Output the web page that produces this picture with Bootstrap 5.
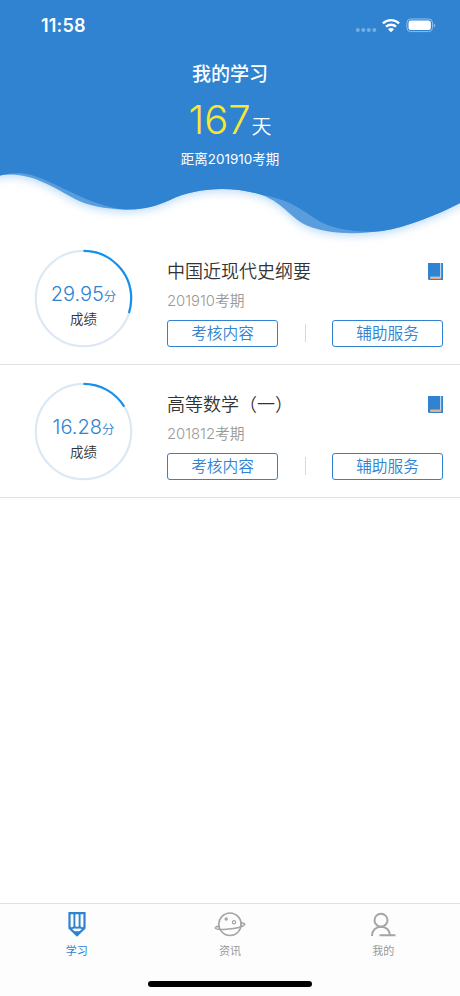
<!DOCTYPE html>
<html lang="zh-CN">
<head>
<meta charset="utf-8">
<meta name="viewport" content="width=device-width, initial-scale=1">
<title>我的学习</title>
<link href="https://cdn.jsdelivr.net/npm/bootstrap@5.3.0/dist/css/bootstrap.min.css" rel="stylesheet">
<style>
:root{--brand:#2f83d1}
body{font-family:Inter,"Noto Sans CJK SC",sans-serif;color:#333;line-height:1.2}
.screen{height:996px}
.hero{background:var(--brand);height:170px;z-index:1}
.status{height:50px;padding:0 24px 0 41px}
.clock{font-size:18px;font-weight:600;letter-spacing:.2px;padding-top:2px}
.hero-title{font-size:19px;font-weight:500;line-height:24px;margin-top:13px}
.days{font-size:40px;font-weight:300;line-height:46px;color:#f9e632;margin-top:10px}
.days small{font-size:20px;color:#fff;margin-left:1px;font-weight:350}
.period-note{font-size:13.5px;line-height:18px;margin-top:0}
.wave{height:61px}
.wave svg{overflow:visible}
.course{height:133.4px;border-bottom:1.5px solid #e0e1e3;padding:1px 17px 0 34px}
.course:first-child{height:134px;padding-top:2px}
.ring{width:99px;height:99px;display:grid;flex:none}
.ring>*{grid-area:1/1}
.score-box{padding-top:13px}
.score{font-size:20px;font-weight:350;line-height:24px;color:var(--brand)}
.score small{font-size:12.5px;font-weight:350}
.score-label{font-size:13.5px;line-height:18px;margin-top:1px;font-weight:350}
.info{margin-left:34px;padding-top:9px}
.course-name{font-size:18px;line-height:24px;font-weight:350}
.term{font-size:14.8px;line-height:18px;color:#999;font-weight:350;margin-top:8px}
.actions{margin-top:10px}
.btn-course{width:111px;height:27px;padding:0;font-size:15.7px;font-weight:350;line-height:25px;border:1.3px solid var(--brand);border-radius:3px;color:var(--brand)}
.divider{width:1px;height:18px;background:#d8d8d8}
.tabs{height:93px;border-top:1px solid #e1e1e1;background:#fdfdfd}
.tab{flex:1;color:#999;font-size:11px;line-height:14px;text-decoration:none;padding-top:6px}
.tab.active{color:var(--brand)}
.tab span{margin-top:4px}
.home-bar{width:164px;height:5.5px;background:#000;margin-bottom:9.5px}
</style>
</head>
<body>
<div class="screen d-flex flex-column bg-white overflow-hidden">
  <header class="hero position-relative text-white text-center">
    <div class="status d-flex align-items-center justify-content-between">
      <span class="clock">11:58</span>
      <svg width="82" height="20" viewBox="354 15 82 20">
        <g fill="#73afe3"><circle cx="357.8" cy="30" r="2"/><circle cx="363.3" cy="30" r="2"/><circle cx="368.8" cy="30" r="2"/><circle cx="374.3" cy="30" r="2"/></g>
        <g fill="none" stroke="#fff" stroke-width="2.4"><path d="M382.9 23.3a11.8 11.8 0 0 1 16.2 0"/><path d="M386 26.7a7.5 7.5 0 0 1 10 0"/></g>
        <path d="M388 29.2a4.6 4.6 0 0 1 6 0l-3 3.1z" fill="#fff"/>
        <rect x="406.9" y="19" width="25.6" height="12.6" rx="3.8" fill="none" stroke="#8fc0ec"/>
        <rect x="408.5" y="20.6" width="22.4" height="9.4" rx="2.3" fill="#fff"/>
        <path d="M433.8 23.2c2 .8 2 3.6 0 4.4z" fill="#8fc0ec"/>
      </svg>
    </div>
    <h1 class="hero-title mb-0">我的学习</h1>
    <div class="days">167<small>天</small></div>
    <div class="period-note">距离201910考期</div>
  </header>
  <div class="wave flex-shrink-0">
    <svg class="d-block" width="460" height="61" viewBox="0 170 460 61">
      <defs><filter id="soft" x="-10%" y="-30%" width="120%" height="180%"><feGaussianBlur stdDeviation="4"/></filter></defs>
      <path d="M-15 150V175.5H0C28 170 53 187 75 199C96 210 140 215 170 200C197 187 233 186 262 195C285 204 291 219 308 226C330 235 360 234 382 231C407 227 437 215 460 203H475V150Z" fill="#a9d0f4" filter="url(#soft)" opacity=".7" transform="translate(0 3)"/>
      <path d="M0 169V175.5C28 170 53 187 75 199C96 210 140 215 170 200C197 187 233 186 262 195C285 204 291 219 308 226C330 235 360 234 382 231C407 227 437 215 460 203V169Z" fill="#5a9ddd"/>
      <path d="M0 169V175.5C5 174 12 173 20 173C48 175 78 202 120 209C138 211.500 157 206 170 200C197 187 233 186 262 195C296 200 309 217 323 223C340 231 366 233 382 231C407 227 437 215 460 203V169Z" fill="#2f83d1"/>
    </svg>
  </div>
  <main class="flex-grow-1">
    <section class="course d-flex align-items-center">
      <div class="ring">
        <svg width="99" height="99" viewBox="0 0 99 99" fill="none" stroke-width="2.2"><circle cx="49.500" cy="49.500" r="47.700" stroke="#dce9f5"/><circle cx="49.500" cy="49.500" r="47.700" stroke="#1590ec" pathLength="100" stroke-dasharray="29.95 100" transform="rotate(-90 49.500 49.500)"/></svg>
        <div class="score-box d-flex flex-column align-items-center justify-content-center"><div class="score">29.95<small>分</small></div><div class="score-label">成绩</div></div>
      </div>
      <div class="info flex-grow-1">
        <div class="d-flex justify-content-between align-items-center">
          <div class="course-name">中国近现代史纲要</div>
          <svg width="15" height="17" viewBox="0 0 15 17"><path d="M0 0h15v17H1.500Q0 17 0 15.500z" fill="#2f83d1"/><path d="M12.700 0v14.200H2.300" stroke="#d9e8f5" fill="none"/><path d="M2.200 14h11v1.900h-11z" fill="#f4b183"/></svg>
        </div>
        <div class="term">201910考期</div>
        <div class="actions d-flex align-items-center justify-content-between"><button class="btn btn-course">考核内容</button><i class="divider"></i><button class="btn btn-course">辅助服务</button></div>
      </div>
    </section>
    <section class="course d-flex align-items-center">
      <div class="ring">
        <svg width="99" height="99" viewBox="0 0 99 99" fill="none" stroke-width="2.2"><circle cx="49.500" cy="49.500" r="47.700" stroke="#dce9f5"/><circle cx="49.500" cy="49.500" r="47.700" stroke="#1590ec" pathLength="100" stroke-dasharray="16.28 100" transform="rotate(-90 49.500 49.500)"/></svg>
        <div class="score-box d-flex flex-column align-items-center justify-content-center"><div class="score">16.28<small>分</small></div><div class="score-label">成绩</div></div>
      </div>
      <div class="info flex-grow-1">
        <div class="d-flex justify-content-between align-items-center">
          <div class="course-name">高等数学（一）</div>
          <svg width="15" height="17" viewBox="0 0 15 17"><path d="M0 0h15v17H1.500Q0 17 0 15.500z" fill="#2f83d1"/><path d="M12.700 0v14.200H2.300" stroke="#d9e8f5" fill="none"/><path d="M2.200 14h11v1.900h-11z" fill="#f4b183"/></svg>
        </div>
        <div class="term">201812考期</div>
        <div class="actions d-flex align-items-center justify-content-between"><button class="btn btn-course">考核内容</button><i class="divider"></i><button class="btn btn-course">辅助服务</button></div>
      </div>
    </section>
  </main>
  <footer class="tabs d-flex flex-column justify-content-between flex-shrink-0">
    <nav class="d-flex">
      <a class="tab active d-flex flex-column align-items-center" href="#">
        <svg width="30" height="30" viewBox="0 0 30 30" fill="none" stroke="currentColor" stroke-width="2.2"><path d="M7.500 3.200h15V18L15 25.200 7.500 18z"/><path d="M12.400 3v14M17.600 3v14" stroke-width="1.900"/><path d="M7.500 17.700q2.500 1.300 5-.7 2.500 1.700 5 0 2.500 2 5 .7" stroke-width="2"/><path d="M11.500 21.800h7l-3.500 3.500z" fill="currentColor" stroke-width="1"/></svg>
        <span>学习</span>
      </a>
      <a class="tab d-flex flex-column align-items-center" href="#">
        <svg width="32" height="30" viewBox="0 0 32 30" fill="none" stroke="#a5a5a5" stroke-width="1.500"><circle cx="16" cy="14.300" r="11.200"/><path d="M5 15.700C2.500 16.700 1 17.500 1.200 18 2 19.800 7 19.700 12.500 19.300 20 18.700 29 16.800 30.700 14.500 31 13.500 29.500 13.100 27 12.800"/><path d="M5.200 15.700v3.400M27 12.700l.1 4"/><circle cx="12.200" cy="9" r="1"/><circle cx="20" cy="12.200" r="1.600" stroke-width="1.200"/></svg>
        <span>资讯</span>
      </a>
      <a class="tab d-flex flex-column align-items-center" href="#">
        <svg width="30" height="30" viewBox="0 0 30 30" fill="none" stroke="#a5a5a5" stroke-width="2"><circle cx="13" cy="10.200" r="6.500"/><path d="M4 26C4 20.500 7.800 16.700 13 16.700c5 0 8.700 3.300 9 8.400M11.500 25.200H27.500"/></svg>
        <span>我的</span>
      </a>
    </nav>
    <div class="home-bar rounded-pill mx-auto"></div>
  </footer>
</div>
<script src="https://cdn.jsdelivr.net/npm/bootstrap@5.3.0/dist/js/bootstrap.bundle.min.js"></script>
</body>
</html>
